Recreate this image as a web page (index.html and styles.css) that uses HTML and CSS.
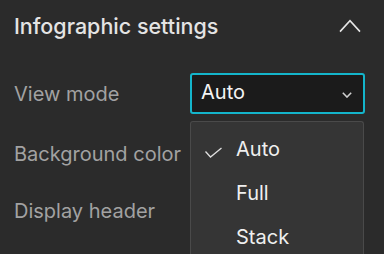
FILE: index.html
```html
<!DOCTYPE html>
<html lang="en">
<head>
<meta charset="utf-8">
<title>Infographic settings</title>
<link rel="stylesheet" href="styles.css">
</head>
<body>
<section class="panel">
  <header class="panel-header">
    <h2 class="panel-title">Infographic settings</h2>
    <svg class="collapse-icon" width="22" height="14" viewBox="0 0 22 14" aria-hidden="true">
      <polyline points="1,12.6 11,1.8 21,12.6" fill="none" stroke="#e6e6e6" stroke-width="1.6"/>
    </svg>
  </header>
  <div class="settings">
    <div class="row row-first">
      <span class="label">View mode</span>
      <div class="select-wrap">
        <div class="select">
          <span class="select-value">Auto</span>
          <svg class="select-chevron" width="10" height="6" viewBox="0 0 10 6" aria-hidden="true">
            <polyline points="0.8,0.8 5,5.1 9.2,0.8" fill="none" stroke="#d0d0d0" stroke-width="1.5"/>
          </svg>
        </div>
        <ul class="menu">
          <li class="menu-item selected">
            <svg class="check" width="17" height="11" viewBox="0 0 17 11" aria-hidden="true">
              <polyline points="0.5,4.5 5.5,10 16.5,1" fill="none" stroke="#dedede" stroke-width="1.3"/>
            </svg>
            <span>Auto</span>
          </li>
          <li class="menu-item"><span class="check-space"></span><span>Full</span></li>
          <li class="menu-item"><span class="check-space"></span><span>Stack</span></li>
        </ul>
      </div>
    </div>
    <div class="row row-second">
      <span class="label">Background color</span>
    </div>
    <div class="row row-third">
      <span class="label">Display header</span>
    </div>
  </div>
</section>
</body>
</html>
```

FILE: styles.css
```css
html, body {
  margin: 0;
  padding: 0;
  background: #2b2b2b;
  overflow: hidden;
}

body {
  width: 384px;
  height: 254px;
  font-family: "Inter", "Open Sans", sans-serif;
}

.panel {
  display: flex;
  flex-direction: column;
}

.panel-header {
  display: flex;
  align-items: center;
  justify-content: space-between;
  height: 51px;
  padding: 0 23px 0 14px;
}

.panel-title {
  margin: 0;
  font-size: 21.5px;
  font-weight: 500;
  color: #e4e4e4;
}

.collapse-icon {
  display: block;
  margin-top: 1px;
}

.settings {
  display: flex;
  flex-direction: column;
  padding: 22px 19px 0 14px;
}

.row {
  display: flex;
  align-items: center;
  height: 41px;
}

.row-second {
  margin-top: 19px;
}

.row-third {
  margin-top: 16px;
}

.label {
  width: 176px;
  flex: none;
  font-size: 20px;
  color: #a2a2a2;
}

.select-wrap {
  position: relative;
  flex: 1;
  height: 41px;
}

.select {
  box-sizing: border-box;
  display: flex;
  align-items: center;
  justify-content: space-between;
  height: 41px;
  padding: 0 11px 4px 9px;
  background: #1b1b1b;
  border: 2px solid #14b5cb;
  border-radius: 3px;
}

.select-value {
  font-size: 20px;
  color: #f4f4f4;
}

.select-chevron {
  display: block;
  margin-top: 6px;
}

.menu {
  position: absolute;
  top: 48px;
  left: 0;
  right: 1px;
  margin: 0;
  padding: 5.6px 0 0;
  list-style: none;
  height: 133px;
  box-sizing: border-box;
  background: #353535;
  border: 1px solid #4a4a4a;
  border-bottom-width: 0;
  border-radius: 3px 3px 0 0;
  overflow: hidden;
}

.menu-item {
  display: flex;
  align-items: center;
  height: 43.7px;
  padding-left: 14px;
  font-size: 20px;
  color: #efefef;
}

.check,
.check-space {
  display: block;
  width: 17px;
  flex: none;
  margin-right: 14px;
}

.check {
  margin-top: 7px;
}
```
